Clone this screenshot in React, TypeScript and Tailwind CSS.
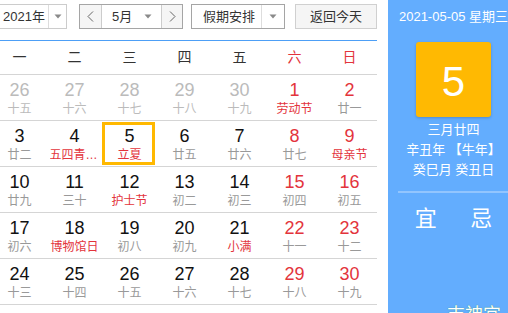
import React from "react";

type Cell = { d: number; l: string; o?: boolean; red?: boolean; lr?: boolean; sel?: boolean };

const weeks: Cell[][] = [
  [
    { d: 26, l: "十五", o: true },
    { d: 27, l: "十六", o: true },
    { d: 28, l: "十七", o: true },
    { d: 29, l: "十八", o: true },
    { d: 30, l: "十九", o: true },
    { d: 1, l: "劳动节", red: true, lr: true },
    { d: 2, l: "廿一", red: true },
  ],
  [
    { d: 3, l: "廿二" },
    { d: 4, l: "五四青年节", lr: true },
    { d: 5, l: "立夏", lr: true, sel: true },
    { d: 6, l: "廿五" },
    { d: 7, l: "廿六" },
    { d: 8, l: "廿七", red: true },
    { d: 9, l: "母亲节", red: true, lr: true },
  ],
  [
    { d: 10, l: "廿九" },
    { d: 11, l: "三十" },
    { d: 12, l: "护士节", lr: true },
    { d: 13, l: "初二" },
    { d: 14, l: "初三" },
    { d: 15, l: "初四", red: true },
    { d: 16, l: "初五", red: true },
  ],
  [
    { d: 17, l: "初六" },
    { d: 18, l: "博物馆日", lr: true },
    { d: 19, l: "初八" },
    { d: 20, l: "初九" },
    { d: 21, l: "小满", lr: true },
    { d: 22, l: "十一", red: true },
    { d: 23, l: "十二", red: true },
  ],
  [
    { d: 24, l: "十三" },
    { d: 25, l: "十四" },
    { d: 26, l: "十五" },
    { d: 27, l: "十六" },
    { d: 28, l: "十七" },
    { d: 29, l: "十八", red: true },
    { d: 30, l: "十九", red: true },
  ],
];

const days = ["一", "二", "三", "四", "五", "六", "日"];

function Tri() {
  return (
    <svg width="8" height="5" viewBox="0 0 8 5">
      <path d="M0.5 0.5h7L4 4.5z" fill="#8a8a8a" />
    </svg>
  );
}

function Chevron({ dir }: { dir: "l" | "r" }) {
  return (
    <svg width="7" height="11" viewBox="0 0 7 11">
      <polyline
        points={dir === "l" ? "6,0.5 1,5.5 6,10.5" : "1,0.5 6,5.5 1,10.5"}
        fill="none"
        stroke="#666"
        strokeWidth="1"
      />
    </svg>
  );
}

export default function App() {
  return (
    <div className="w-[508px] h-[313px] overflow-hidden flex bg-white font-['Liberation_Sans','Noto_Sans_CJK_SC',sans-serif]">
      <div className="w-[385px] ml-[-8px] shrink-0">
        <div className="h-[40px] pt-[4px] flex text-[13px] text-[#333]">
          <div className="h-[25px] w-[75px] flex border border-[#ccc] bg-white">
            <div className="w-[56px] pl-[10px] flex items-center border-r border-[#ddd]">2021年</div>
            <div className="flex-1 flex items-center justify-center">
              <Tri />
            </div>
          </div>
          <div className="h-[25px] w-[104px] ml-[12px] flex border border-[#a5a5a5]">
            <div className="w-[21px] bg-[#f5f5f5] flex items-center justify-center">
              <Chevron dir="l" />
            </div>
            <div className="w-[61px] flex items-center justify-between border-x border-[#ccc] bg-white pl-[10px] pr-[9px]">
              <span>5月</span>
              <Tri />
            </div>
            <div className="flex-1 bg-[#f5f5f5] flex items-center justify-center">
              <Chevron dir="r" />
            </div>
          </div>
          <div className="h-[25px] w-[94px] ml-[8px] flex border border-[#a5a5a5] bg-white">
            <div className="w-[70px] pl-[11px] flex items-center border-r border-[#ddd]">假期安排</div>
            <div className="flex-1 flex items-center justify-center">
              <Tri />
            </div>
          </div>
          <div className="h-[25px] w-[82px] ml-[10px] flex items-center justify-center border border-[#d0d0d0] bg-[#f5f5f5]">
            返回今天
          </div>
        </div>
        <div className="h-px bg-[#4d9ff6]" />
        <div className="h-[34px] border-b border-[#d5d5d5] grid grid-cols-7 items-center text-center text-[14px] text-[#333]">
          {days.map((d, i) => (
            <div key={d} className={i >= 5 ? "text-[#e3343c]" : ""}>
              {d}
            </div>
          ))}
        </div>
        {weeks.map((w, wi) => (
          <div key={wi} className="h-[46px] border-b border-[#d5d5d5] grid grid-cols-7">
            {w.map((c, ci) => (
              <div key={ci} className="relative flex flex-col items-center pt-[5px]">
                {c.sel && (
                  <div className="absolute left-0 top-px w-[53px] h-[43px] border-[3px] border-[#ffb800]" />
                )}
                <div
                  className={
                    "text-[18px] leading-[20px] " +
                    (c.o ? "text-[#bbbbbb]" : c.red ? "text-[#e3343c]" : "text-[#111]")
                  }
                >
                  {c.d}
                </div>
                <div
                  className={
                    "text-[12px] leading-[16px] max-w-[50px] truncate mt-px " +
                    (c.o && !c.lr ? "text-[#bbbbbb]" : c.lr ? "text-[#e3343c]" : "text-[#999]")
                  }
                >
                  {c.l}
                </div>
              </div>
            ))}
          </div>
        ))}
      </div>
      <div className="ml-[11px] w-[131px] shrink-0 bg-[#63adfe] text-white flex flex-col items-center">
        <div className="shrink-0 pt-[7px] text-[13px] leading-[20px] whitespace-nowrap">2021-05-05 星期三</div>
        <div className="shrink-0 mt-[15px] w-[75px] h-[75px] rounded-[3px] bg-[#ffb902] shadow-[0_1px_3px_rgba(0,0,0,0.2)] flex items-center justify-center text-[42px] leading-none pt-[4px]">
          5
        </div>
        <div className="shrink-0 mt-[3px] text-[13px] leading-[20px] text-center whitespace-nowrap">
          <div>三月廿四</div>
          <div>辛丑年 【牛年】</div>
          <div>癸巳月 癸丑日</div>
        </div>
        <div className="shrink-0 mt-[11px] h-[2px] self-stretch mx-[10px] bg-white/30" />
        <div className="shrink-0 mt-[14px] self-stretch px-[10px] flex text-[22px] leading-[24px]">
          <div className="flex-1 text-center">宜</div>
          <div className="flex-1 text-center">忌</div>
        </div>
        <div className="shrink-0 mt-[74px] self-stretch pl-[59px] text-[18px] leading-[20px] whitespace-nowrap [text-shadow:0_0_1px_#2e9b4e]">
          吉神宜
        </div>
      </div>
    </div>
  );
}
